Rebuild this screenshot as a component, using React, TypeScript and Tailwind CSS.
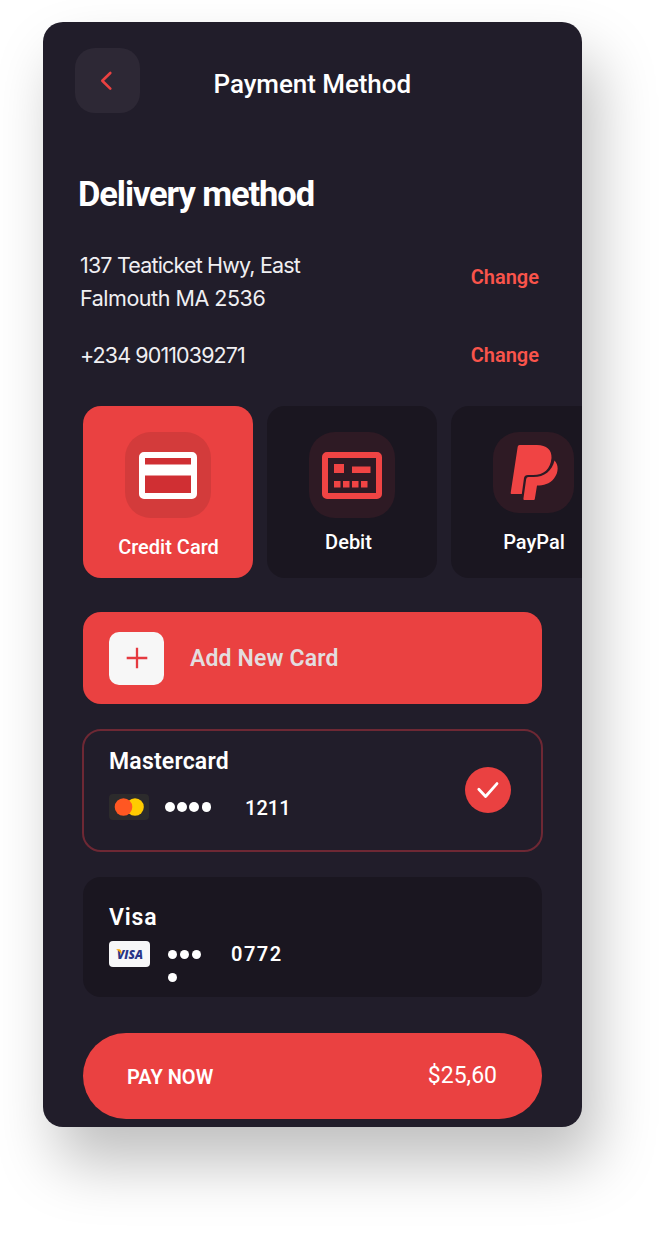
import type { ReactNode } from "react";

function Dot() {
  return <span className="size-[9.500px] rounded-full bg-white" />;
}

function Method({ label, children, labelClass, active = false }: { label: string; children: ReactNode; labelClass: string; active?: boolean }) {
  return (
    <button
      className={`flex h-[172px] w-[170px] shrink-0 flex-col items-center rounded-[18px] pt-[26px] text-[20px] leading-6 font-medium text-white ${
        active ? "bg-[#ea4141]" : "bg-[#1a1620]"
      }`}
    >
      {children}
      <span className={labelClass}>{label}</span>
    </button>
  );
}

export default function App() {
  return (
    <div className="min-h-[1234px] overflow-hidden bg-white pt-[22px] pl-[43px] font-['Roboto',sans-serif]">
      <main className="h-[1105px] w-[539px] overflow-hidden rounded-[20px] bg-[#211d2a] text-white shadow-[14px_36px_60px_rgba(0,0,0,0.25)]">
        <header className="flex pt-[26px] pl-8">
          <button aria-label="Back" className="flex size-[64.500px] items-center justify-center rounded-[20px] bg-[#2d2835]">
            <svg className="size-6" viewBox="0 0 24 24" fill="none" stroke="#ea4141" strokeWidth="2.6" strokeLinecap="round" strokeLinejoin="round">
              <path d="M15.300 5 7.300 12.800 15.300 20.600" />
            </svg>
          </button>
          <h1 className="mt-[20px] ml-[74px] text-[26px] leading-8 font-medium tracking-[-0.06px]">Payment Method</h1>
        </header>

        <h2 className="mt-[61.500px] pl-[35px] text-[34.5px] leading-[40px] font-bold tracking-[-1.1px]">Delivery method</h2>

        <section className="mt-[35px] flex h-[66px] items-start justify-between pr-[43px] pl-[37px]">
          <p className="font-['Inter',sans-serif] text-[21.5px] leading-[33px] text-[#f0eff2]">
            <span className="block tracking-[-0.83px]">137 Teaticket Hwy, East</span>
            <span className="block tracking-[-0.47px]">Falmouth MA 2536</span>
          </p>
          <button className="mt-[16px] text-[20px] leading-6 font-semibold text-[#f9544b]">Change</button>
        </section>
        <section className="mt-[24px] flex h-[33px] items-start justify-between pr-[43px] pl-[37px]">
          <p className="font-['Inter',sans-serif] text-[21.5px] leading-[33px] tracking-[-0.9px] text-[#f0eff2]">+234 9011039271</p>
          <button className="mt-[4px] text-[20px] leading-6 font-semibold text-[#f9544b]">Change</button>
        </section>

        <section className="mt-[34px] flex gap-[14px] pl-10">
          <Method label="Credit Card" labelClass="mt-[17px] ml-[1px]" active>
            <span className="flex size-[86px] items-center justify-center rounded-[26px] bg-[#d33b3b]">
              <svg className="mt-[1px] h-[47px] w-[58px]" viewBox="0 0 58 47">
                <rect x="3" y="3" width="52" height="41" rx="2" fill="#d02f33" stroke="#fff" strokeWidth="6" />
                <path d="M3 12.5h52v11H3z" fill="#fff" />
              </svg>
            </span>
          </Method>
          <Method label="Debit" labelClass="mt-[12px] mr-[7px]">
            <span className="flex size-[86px] items-center justify-center rounded-[26px] bg-[#2e1a24]">
              <svg className="mr-[1px] h-[47px] w-[60px]" viewBox="0 0 60 47">
                <rect x="3" y="3" width="54" height="41" rx="2" fill="#26182000" stroke="#f04444" strokeWidth="6" />
                <path
                  d="M12 12h10v9H12zM30 14.5h18.500v6.500H30zM12 29h6.500v6.500H12zM21 29h6.500v6.500H21zM30 29h6.500v6.500H30zM39 29h6.500v6.500H39z"
                  fill="#f04444"
                />
              </svg>
            </span>
          </Method>
          <Method label="PayPal" labelClass="mt-[12px] mr-[4px]">
            <span className="mr-[6px] mb-[5px] flex size-[81px] items-center justify-center rounded-[26px] bg-[#2e1a24]">
              <svg className="mb-px ml-[1px] h-[56px] w-[48px]" viewBox="0 0 48 56">
                <path d="M9.500 1H27C36.500 1 42 6 41.500 14C40.500 25 34 31 23 31H18Q14.500 31 14 34L11.800 50H1.500Q.5 50 .7 48.800L7.700 2.700Q8 1 9.500 1Z" fill="#f04444" />
                <path d="M44.500 16.500C49 21 48.500 29 44 34.500C39.500 40 33.500 41.500 27 41.500L24.800 55Q24.700 56 23.700 56H14.500Q13.200 56 13.400 54.800L16.200 35Q16.500 33 18.500 33H23.500C34.500 33 42 27 44.500 16.500Z" fill="#f04444" />
              </svg>
            </span>
          </Method>
        </section>

        <button className="mt-[34px] ml-10 flex h-[92px] w-[459px] items-center rounded-[18px] bg-[#ea4141] pl-[26px]">
          <span className="flex h-[53px] w-[55px] items-center justify-center rounded-[10px] bg-[#f7f7f7]">
            <svg className="size-[22px]" viewBox="0 0 22 22" stroke="#e53a40" strokeWidth="2.3">
              <path d="M11 .7v20.600M.7 11h20.600" />
            </svg>
          </span>
          <span className="mt-[2px] ml-[26px] text-[23px] leading-7 font-semibold tracking-[0.15px] text-[#e3dddf]">Add New Card</span>
        </button>

        <section className="mt-[25px] ml-[39px] flex h-[123px] w-[461px] justify-between rounded-[19px] border-2 border-[#6e2834] pt-[17px] pr-[30px] pl-[25px]">
          <div>
            <h3 className="text-[23px] leading-7 font-semibold tracking-[0.2px]">Mastercard</h3>
            <div className="mt-[18px] flex h-[26px] items-center">
              <svg className="h-[26px] w-[40px]" viewBox="0 0 40 26">
                <rect width="40" height="26" rx="4" fill="#2c2b2c" />
                <circle cx="26" cy="13" r="8.800" fill="#ffcc00" />
                <circle cx="14.500" cy="13" r="8.800" fill="#ff5722" />
              </svg>
              <span className="ml-4 flex gap-[2.700px]"><Dot /><Dot /><Dot /><Dot /></span>
              <span className="mt-px ml-[34px] text-[20px] leading-6 font-medium">1211</span>
            </div>
          </div>
          <span className="mt-[19px] flex size-[46px] items-center justify-center rounded-full bg-[#ea4141]">
            <svg className="size-6" viewBox="0 0 24 24" fill="none" stroke="#fff" strokeWidth="2.8" strokeLinecap="round" strokeLinejoin="round">
              <path d="m2.800 11.300 6.800 7.200L21 5.600" />
            </svg>
          </span>
        </section>

        <section className="mt-[25px] ml-10 h-[120px] w-[459px] rounded-[18px] bg-[#1a1620] pt-[27px] pl-[26px]">
          <h3 className="text-[23px] leading-7 font-semibold tracking-[0.8px]">Visa</h3>
          <div className="mt-[9px] flex h-[26px] items-start">
            <svg className="h-[26px] w-[41px]" viewBox="0 0 41 26">
              <rect width="41" height="26" rx="4" fill="#f7f7f8" />
              <text x="8" y="17.500" textLength="26" lengthAdjust="spacingAndGlyphs" fontFamily="Open Sans, sans-serif" fontSize="13" fontWeight="800" fontStyle="italic" fill="#293688">VISA</text>
              <path d="M7 8.200h3.500Q12 8.500 12.300 10.500l.5 3Q11 10 7 8.200Z" fill="#f7a600" />
            </svg>
            <span className="mt-[8.500px] ml-[17.500px] flex w-[34.500px] flex-wrap gap-x-[2.700px] gap-y-[13.500px]"><Dot /><Dot /><Dot /><Dot /></span>
            <span className="mt-[1px] ml-[29px] text-[20px] leading-6 font-semibold tracking-[1.5px]">0772</span>
          </div>
        </section>

        <button className="mt-[36px] ml-10 flex h-[86px] w-[459px] items-center justify-between rounded-full bg-[#ea4141] pr-[45px] pl-11">
          <span className="mt-[1px] text-[20px] leading-6 font-semibold">PAY NOW</span>
          <span className="text-[23px] leading-7">$25,60</span>
        </button>
      </main>
    </div>
  );
}
